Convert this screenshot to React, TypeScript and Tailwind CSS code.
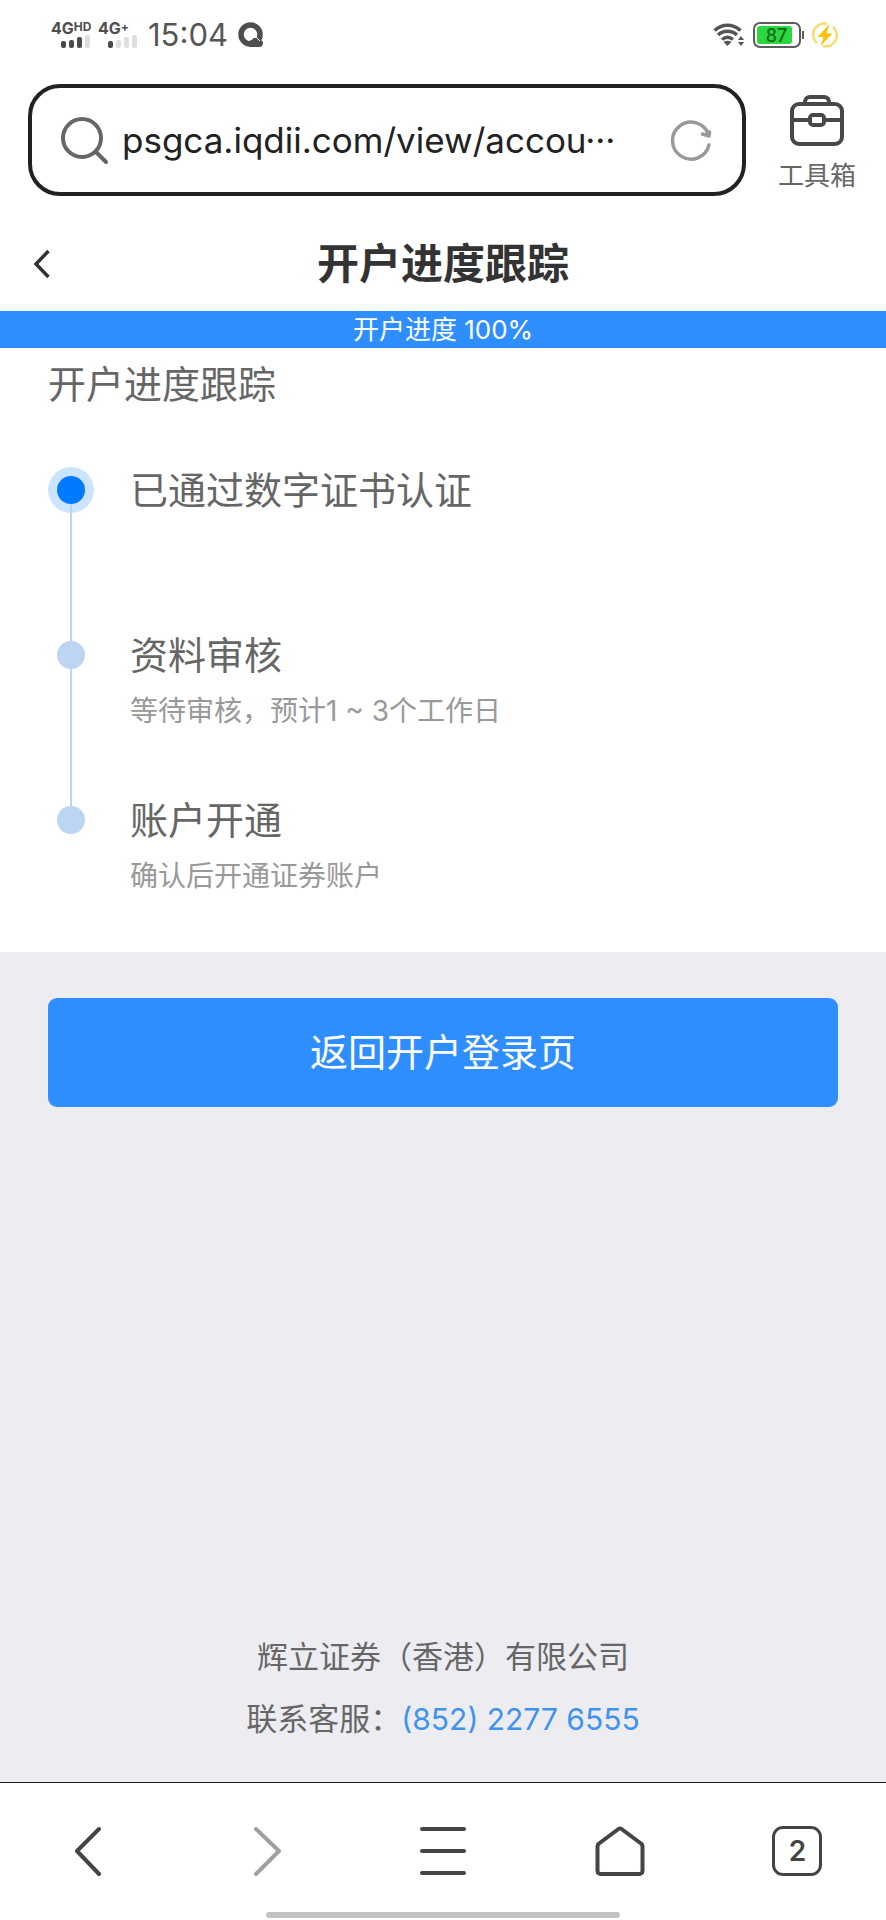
import { useState } from 'react'

const steps = [
  { title: '已通过数字证书认证', desc: '', active: true },
  { title: '资料审核', desc: '等待审核，预计1 ~ 3个工作日', active: false },
  { title: '账户开通', desc: '确认后开通证券账户', active: false },
]

function Signal({ type, sup, level }: { type: string; sup: string; level: number }) {
  const tops = [6, 5, 2, 0]
  return (
    <div className="flex flex-col w-[39px]">
      <div className="flex items-start h-[13px] font-bold text-[#4f4f4f]">
        <span className="text-base leading-[13px]">{type}</span>
        <span className="text-xs leading-[9px]">{sup}</span>
      </div>
      <svg width="29" height="13" viewBox="0 0 29 13" className="self-end">
        {tops.map((top, i) => (
          <rect
            key={i}
            x={i * 8}
            y={top}
            width="5"
            height={13 - top}
            rx="2"
            fill={i < level ? '#4a4a4a' : '#dedede'}
          />
        ))}
      </svg>
    </div>
  )
}

function StatusBar() {
  return (
    <div className="flex items-center justify-between h-[70px] pl-[51px] pr-12">
      <div className="flex items-center">
        <Signal type="4G" sup="HD" level={3} />
        <div className="w-2" />
        <Signal type="4G" sup="+" level={1} />
        <span className="ml-[11px] text-[31px] leading-9 text-[#555]">15:04</span>
        <svg width="26" height="26" viewBox="0 0 26 26" className="ml-2.5">
          <circle cx="12.5" cy="12.5" r="9.5" fill="none" stroke="#4f4f4f" strokeWidth="5.500" />
          <path d="M10 22c0-3 2-4 4-4 1-3 5-3 6 0 3-1 5 1 5 3s-1 4-4 4h-8c-2 0-3-1-3-3z" fill="#4f4f4f" />
          <path d="M17 14l5 5" stroke="#fff" strokeWidth="1" />
        </svg>
      </div>
      <div className="flex items-center">
        <svg width="32" height="24" viewBox="0 0 32 24" fill="none" stroke="#555" strokeWidth="3.4">
          <path d="M1.5 7.5C9 .5 20 .5 27.500 7.5" />
          <path d="M5 12c5.500-5 13.500-5 19 0" />
          <path d="M9 16.500c3.500-3 7.500-3 11 0" />
          <path d="M10.500 19q4-2.500 8 0l-4 4z" fill="#555" stroke="none" />
          <path d="M25 17l3-4 3 4zM25 19l3 4 3-4z" fill="#555" stroke="none" />
        </svg>
        <div className="ml-2 flex items-center">
          <div className="w-[48px] h-[26px] rounded-[7px] border-2 border-[#5c5c5c] p-[2px]">
            <div className="flex items-center justify-center h-full w-[35px] rounded-[3px] bg-[#2bd63f] pl-1 text-[18px] font-medium text-[#0e6a1c]">
              87
            </div>
          </div>
          <div className="ml-px h-2 w-[2px] bg-[#5c5c5c]" />
        </div>
        <svg width="26" height="26" viewBox="0 0 26 26" className="ml-2">
          <g fill="none" stroke="#f9dc6c" strokeWidth="2.500">
            <path d="M15 2A11 11 0 0 0 5 21" />
            <path d="M11 24A11 11 0 0 0 21 5" />
          </g>
          <path d="M17.500 2L5.500 15h6L8.500 24 20.500 11.500h-6z" fill="#fbc30b" />
        </svg>
      </div>
    </div>
  )
}

function AddressBar() {
  const [url, setUrl] = useState('psgca.iqdii.com/view/accou···')

  return (
    <div className="flex gap-8 pt-3.5 pb-5 pl-7 pr-[30px]">
      <div className="flex flex-1 min-w-0 items-center h-28 rounded-[32px] border-4 border-[#222] pl-[29px] pr-[30px]">
        <svg width="48" height="48" viewBox="0 0 48 48" fill="none" stroke="#666" strokeWidth="4" className="shrink-0">
          <circle cx="21" cy="22" r="19" />
          <path d="M35 36l10 10" strokeLinecap="round" />
        </svg>
        <input
          type="text"
          aria-label="网址"
          value={url}
          onChange={(e) => setUrl(e.target.value)}
          className="ml-[13px] flex-1 min-w-0 h-14 bg-transparent text-[35px] text-[#222] outline-none"
        />
        <button type="button" aria-label="刷新">
          <svg width="42" height="42" viewBox="0 0 42 42" fill="none" stroke="#999" strokeWidth="3.500" strokeLinecap="round" strokeLinejoin="round">
            <path d="M39 26A18.500 18.500 0 1 1 38.500 15.500" />
            <path d="M32.500 15l6.500 2 .5-4" />
          </svg>
        </button>
      </div>
      <button type="button" className="flex flex-col items-center pt-2.5 text-[26px] leading-10 text-[#666]">
        <svg width="56" height="52" viewBox="0 0 56 52" fill="none" stroke="#484848" strokeWidth="4" className="mb-2.5">
          <rect x="3" y="10" width="50" height="40" rx="7" />
          <path d="M16 10V8c0-3 2-5 5-5h14c3 0 5 2 5 5v2" />
          <path d="M3 26h18M35 26h18" />
          <rect x="21" y="21" width="14" height="10" rx="3" />
        </svg>
        工具箱
      </button>
    </div>
  )
}

function Timeline() {
  return (
    <ol className="pt-[42px] pb-12">
      {steps.map((step, i) => {
        const last = i === steps.length - 1
        return (
          <li key={step.title} className={`flex gap-9 ${last ? '' : 'min-h-[165px]'}`}>
            <div className="flex flex-col items-center w-[46px]">
              <div className={`w-[2px] h-3.5 ${i === 0 ? '' : 'bg-[#bcd5f3]'}`} />
              <div
                className={`w-7 h-7 rounded-full ${
                  step.active ? 'bg-[#007aff] ring-[9px] ring-[#cce4ff]' : 'bg-[#bcd5f3]'
                }`}
              />
              {!last && <div className="relative w-[2px] flex-1 bg-[#bcd5f3]" />}
            </div>
            <div>
              <h3 className="text-[38px] leading-[56px] text-[#666]">{step.title}</h3>
              {step.desc && <p className="text-[28px] leading-[56px] text-[#999]">{step.desc}</p>}
            </div>
          </li>
        )
      })}
    </ol>
  )
}

function BottomNav() {
  const icon = {
    width: 50,
    height: 50,
    viewBox: '0 0 50 50',
    fill: 'none',
    stroke: '#444',
    strokeWidth: 4,
    strokeLinecap: 'round' as const,
    strokeLinejoin: 'round' as const,
  }

  return (
    <nav className="border-t border-[#1c1b22] bg-white pt-[43px] pb-[2px]">
      <div className="grid grid-cols-5 justify-items-center">
        <button type="button" aria-label="后退">
          <svg {...icon}>
            <path d="M35 3L13 25l22 23" />
          </svg>
        </button>
        <button type="button" aria-label="前进">
          <svg {...icon} stroke="#a0a0a0">
            <path d="M15 3l23 22-23 23" />
          </svg>
        </button>
        <button type="button" aria-label="菜单">
          <svg {...icon}>
            <path d="M4 3h42M4 25h42M4 47h42" />
          </svg>
        </button>
        <button type="button" aria-label="主页">
          <svg {...icon}>
            <path d="M23.500 3q1.500-1 3 0L46 17.500q1.500 1 1.500 3V45a3 3 0 0 1-3 3h-39a3 3 0 0 1-3-3V20.500q0-2 1.500-3z" />
          </svg>
        </button>
        <button
          type="button"
          className="w-[50px] h-[50px] rounded-[11px] border-[3px] border-[#444] text-[28px] leading-none font-semibold text-[#444]"
        >
          2
        </button>
      </div>
      <div className="mx-auto mt-9 h-1.5 w-2/5 rounded-full bg-[#c2c2c2]" />
    </nav>
  )
}

function App() {
  return (
    <div className="flex flex-col min-h-screen bg-white font-['Inter','Noto_Sans_CJK_SC',sans-serif]">
      <StatusBar />
      <AddressBar />

      <header className="grid grid-cols-[1fr_auto_1fr] items-center h-[95px]">
        <button type="button" aria-label="返回" className="justify-self-start pl-8">
          <svg width="20" height="32" viewBox="0 0 20 32" fill="none" stroke="#333" strokeWidth="3.500">
            <path d="M16.500 3L4 16l12.500 13" />
          </svg>
        </button>
        <h1 className="text-[42px] leading-[60px] font-bold text-[#333]">开户进度跟踪</h1>
      </header>

      <div className="h-[37px] bg-[#2e8eff] text-center text-[26px] leading-[37px] text-white">开户进度 100%</div>

      <section className="px-12">
        <h2 className="text-[38px] leading-[72px] text-[#666]">开户进度跟踪</h2>
        <Timeline />
      </section>

      <main className="flex flex-1 flex-col justify-between bg-[#edecf1] px-12 pt-[46px] pb-8">
        <button type="button" className="h-[109px] w-full rounded-[9px] bg-[#2e8eff] text-[38px] text-white">
          返回开户登录页
        </button>
        <footer className="text-center text-[31px] leading-[62px] text-[#666]">
          <p>辉立证券（香港）有限公司</p>
          <p>
            联系客服：
            <a href="tel:+85222776555" className="text-[30px] text-[#3d93f0]">
              (852) 2277 6555
            </a>
          </p>
        </footer>
      </main>

      <BottomNav />
    </div>
  )
}

export default App
